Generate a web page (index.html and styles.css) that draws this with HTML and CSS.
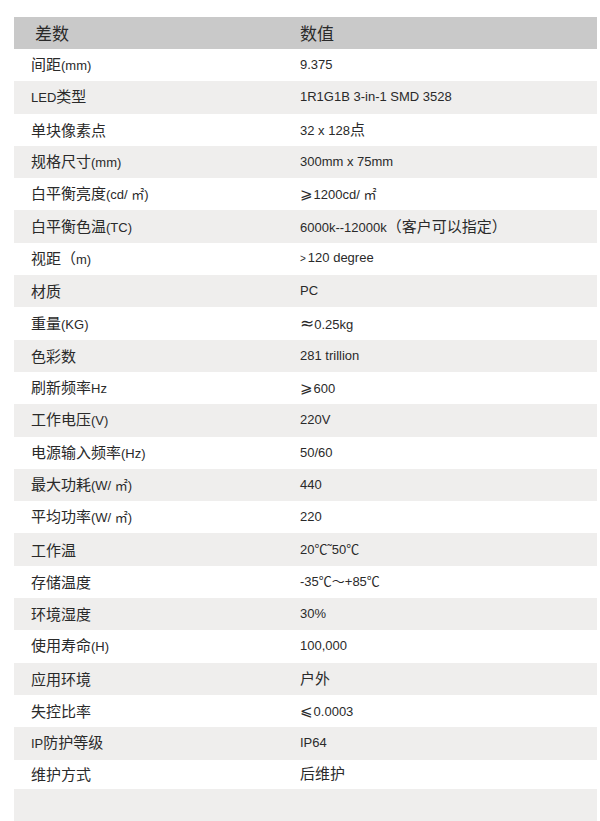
FILE: index.html
```html
<!DOCTYPE html>
<html lang="zh-CN">
<head>
<meta charset="utf-8">
<title>参数</title>
<link rel="stylesheet" href="styles.css">
</head>
<body>
<div class="spec">
  <div class="row head"><div class="k">差数</div><div class="v">数值</div></div>
  <div class="row"><div class="k">间距<span class="lat">(mm)</span></div><div class="v">9.375</div></div>
  <div class="row alt"><div class="k"><span class="lat">LED</span>类型</div><div class="v">1R1G1B 3-in-1 SMD 3528</div></div>
  <div class="row"><div class="k">单块像素点</div><div class="v">32 x 128<span class="cn">点</span></div></div>
  <div class="row alt"><div class="k">规格尺寸<span class="lat">(mm)</span></div><div class="v">300mm x 75mm</div></div>
  <div class="row"><div class="k">白平衡亮度<span class="lat">(cd/ ㎡)</span></div><div class="v"><span class="sym">⩾</span>1200cd/ ㎡</div></div>
  <div class="row alt"><div class="k">白平衡色温<span class="lat">(TC)</span></div><div class="v">6000k--12000k<span class="cn">（客户可以指定）</span></div></div>
  <div class="row"><div class="k">视距（<span class="lat">m)</span></div><div class="v"><span class="gt">&gt;</span>120 degree</div></div>
  <div class="row alt"><div class="k">材质</div><div class="v">PC</div></div>
  <div class="row"><div class="k">重量<span class="lat">(KG)</span></div><div class="v"><span class="approx">≈</span>0.25kg</div></div>
  <div class="row alt"><div class="k">色彩数</div><div class="v">281 trillion</div></div>
  <div class="row"><div class="k">刷新频率<span class="lat">Hz</span></div><div class="v"><span class="sym">⩾</span>600</div></div>
  <div class="row alt"><div class="k">工作电压<span class="lat">(V)</span></div><div class="v">220V</div></div>
  <div class="row"><div class="k">电源输入频率<span class="lat">(Hz)</span></div><div class="v">50/60</div></div>
  <div class="row alt"><div class="k">最大功耗<span class="lat">(W/ ㎡)</span></div><div class="v">440</div></div>
  <div class="row"><div class="k">平均功率<span class="lat">(W/ ㎡)</span></div><div class="v">220</div></div>
  <div class="row alt"><div class="k">工作温</div><div class="v">20℃˜50℃</div></div>
  <div class="row"><div class="k">存储温度</div><div class="v">-35℃～+85℃</div></div>
  <div class="row alt"><div class="k">环境湿度</div><div class="v">30%</div></div>
  <div class="row"><div class="k">使用寿命<span class="lat">(H)</span></div><div class="v">100,000</div></div>
  <div class="row alt"><div class="k">应用环境</div><div class="v"><span class="cn">户外</span></div></div>
  <div class="row"><div class="k">失控比率</div><div class="v"><span class="sym">⩽</span>0.0003</div></div>
  <div class="row alt"><div class="k"><span class="lat">IP</span>防护等级</div><div class="v">IP64</div></div>
  <div class="row last"><div class="k">维护方式</div><div class="v"><span class="cn">后维护</span></div></div>
  <div class="row alt empty"><div class="k"></div><div class="v"></div></div>
</div>
</body>
</html>
```
FILE: styles.css
```css
html, body {
  margin: 0;
  padding: 0;
  background: #ffffff;
}
body {
  font-family: "Noto Sans CJK SC", "Liberation Sans", sans-serif;
  color: #2a2a2a;
}
.spec {
  margin: 17px 0 0 14px;
  width: 583px;
  display: flex;
  flex-direction: column;
}
.row {
  display: grid;
  grid-template-columns: 286px 1fr;
  align-items: center;
  height: 32.3px;
}
.row.alt {
  background: #efeeed;
}
.row.head {
  background: #c9c9c9;
  height: 32px;
}
.row.last {
  height: 29.5px;
}
.row.empty {
  height: 33px;
}
.k {
  padding-left: 17px;
  font-size: 15px;
  line-height: 20px;
  white-space: nowrap;
}
.head .k {
  padding-left: 21px;
  font-size: 17px;
}
.head .v {
  font-family: "Noto Sans CJK SC", sans-serif;
  font-size: 17px;
}
.lat {
  font-family: "Liberation Sans", "Noto Sans CJK SC", sans-serif;
  font-size: 13px;
}
.v {
  font-family: "Liberation Sans", "Noto Sans CJK SC", sans-serif;
  font-size: 13px;
  line-height: 20px;
  white-space: nowrap;
}
.cn {
  font-family: "Noto Sans CJK SC", sans-serif;
  font-size: 15px;
}
.sym {
  font-family: "DejaVu Sans", "Noto Sans CJK SC", sans-serif;
  font-size: 15px;
  margin-right: 1px;
}
.approx {
  font-family: "DejaVu Sans", sans-serif;
  font-size: 17px;
}
.gt {
  font-size: 10px;
  margin-right: 2px;
}
```
